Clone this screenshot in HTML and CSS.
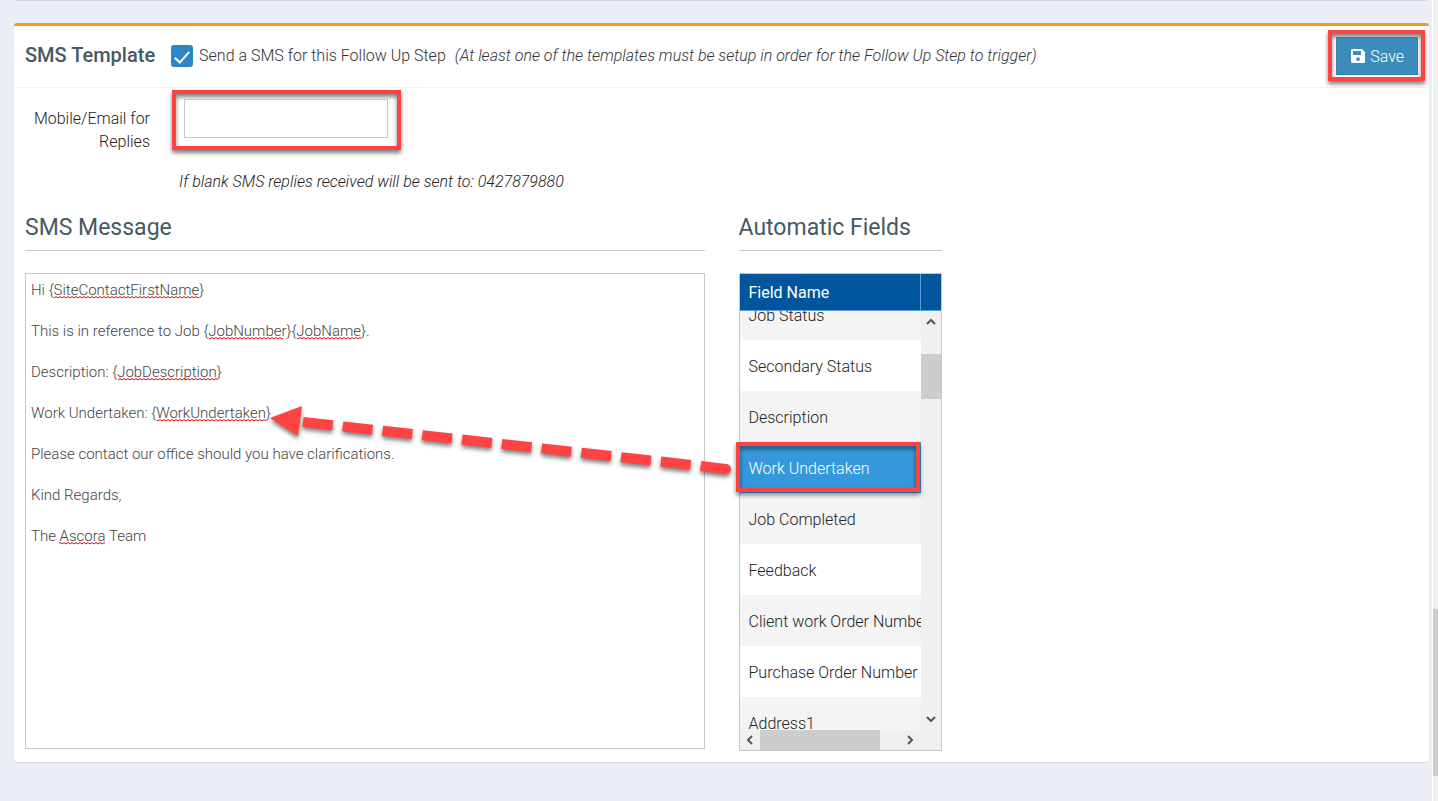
FILE: index.html
```html
<!DOCTYPE html>
<html lang="en">
<head>
  <meta charset="UTF-8" />
  <title>Follow Up Step - SMS Template</title>
  <link rel="stylesheet" href="styles.css">
</head>
<body>

  <main class="page">
    <div class="box-previous"></div>

    <form class="box box-warning">
      <div class="box-header">
        <h3 class="box-title">SMS Template</h3>
        <input type="checkbox" id="send_sms" class="check" checked>
        <label for="send_sms">Send a SMS for this Follow Up Step</label>
        <em class="note">(At least one of the templates must be setup in order for the Follow Up Step to trigger)</em>
        <div class="callout callout-save">
          <button type="button" class="btn-save">
            <svg width="16" height="16" viewBox="0 0 16 16" aria-hidden="true">
              <path fill="#fff" fill-rule="evenodd" d="M2 1h10l3 3v9.500a1.500 1.500 0 0 1-1.500 1.500h-11a1.500 1.500 0 0 1-1.500-1.500v-11a1.500 1.500 0 0 1 1-1.500zM3 3v4h8v-4zM8 9.200a1.900 1.900 0 1 0 0 3.800a1.900 1.900 0 1 0 0-3.800z"/>
            </svg>
            Save
          </button>
        </div>
      </div>

      <div class="box-body">
        <div class="reply">
          <label for="reply_to">Mobile/Email for Replies</label>
          <div class="callout callout-reply">
            <input type="text" id="reply_to" name="reply_to">
          </div>
          <em class="reply-help">If blank SMS replies received will be sent to: 0427879880</em>
        </div>

        <div class="row">
          <div class="col-message">
            <h4><label for="message">SMS Message</label></h4>
            <div class="editor">
              <textarea id="message" name="message" spellcheck="false">Hi {SiteContactFirstName}
This is in reference to Job {JobNumber}{JobName}.
Description: {JobDescription}
Work Undertaken: {WorkUndertaken}
Please contact our office should you have clarifications.
Kind Regards,
The Ascora Team</textarea>
              <!-- spelling marks, one wave per 41px line -->
              <svg class="spelling" width="400" height="300" aria-hidden="true">
                <defs>
                  <pattern id="wave" y="22" width="4" height="41" patternUnits="userSpaceOnUse">
                    <path d="M-1 3L0 2L2 0.500L4 2L5 3" fill="none" stroke="#f00000"/>
                  </pattern>
                </defs>
                <g fill="url(#wave)">
                  <rect x="28" y="22" width="145" height="3"/>
                  <rect x="183" y="63" width="74" height="3"/>
                  <rect x="271" y="63" width="64" height="3"/>
                  <rect x="92" y="104" width="99" height="3"/>
                  <rect x="131" y="145" width="109" height="3"/>
                  <rect x="33" y="268" width="46" height="3"/>
                </g>
              </svg>
            </div>
          </div>

          <div class="col-fields">
            <h4>Automatic Fields</h4>
            <div class="grid">
              <table class="grid-header">
                <thead>
                  <tr><th scope="col">Field Name</th><td class="corner"></td></tr>
                </thead>
              </table>
              <div class="grid-content">
                <div class="grid-rows">
                  <table>
                    <tbody>
                      <tr><td>Job Status</td></tr>
                      <tr><td>Secondary Status</td></tr>
                      <tr><td>Description</td></tr>
                      <tr class="selected"><td>Work Undertaken</td></tr>
                      <tr><td>Job Completed</td></tr>
                      <tr><td>Feedback</td></tr>
                      <tr><td>Client work Order Number</td></tr>
                      <tr><td>Purchase Order Number</td></tr>
                      <tr><td>Address1</td></tr>
                    </tbody>
                  </table>
                </div>
                <div class="scroll-y">
                  <svg width="20" height="20" viewBox="0 0 20 20"><path d="M6 13l4-4l4 4"/></svg>
                  <div class="thumb"></div>
                  <svg width="20" height="20" viewBox="0 0 20 20"><path d="M6 7l4 4l4-4"/></svg>
                </div>
                <div class="scroll-x">
                  <svg width="20" height="20" viewBox="0 0 20 20"><path d="M12 6l-4 4l4 4"/></svg>
                  <div class="thumb"></div>
                  <svg width="20" height="20" viewBox="0 0 20 20"><path d="M7 6l4 4l-4 4"/></svg>
                </div>
              </div>
            </div>
          </div>

          <!-- arrow from the selected field to its place in the message -->
          <svg class="arrow" width="940" height="320" viewBox="8 216 940 320" aria-hidden="true">
            <path d="M270 418L302 406L298 436z" fill="#ff4343"/>
            <path d="M303 422L701 466" fill="none" stroke="#ff4343" stroke-width="10" stroke-dasharray="30 10"/>
            <path d="M701 466L725 469" fill="none" stroke="#ff4343" stroke-width="10"/>
            <circle cx="726" cy="469" r="5" fill="#ff4343"/>
            <rect x="738" y="444" width="180" height="46" fill="none" stroke="#ff4343" stroke-width="4"/>
          </svg>
        </div>
      </div>
    </form>
  </main>

  <div class="page-scroll"><div class="thumb"></div></div>

</body>
</html>
```
FILE: styles.css
```css
* {
  box-sizing: border-box;
}
body {
  margin: 0;
  height: 100vh;
  display: flex;
  overflow: hidden;
  background-color: #ebeef4;
  font-family: Roboto, "Liberation Sans", sans-serif;
  font-size: 16px;
  font-weight: 300;
  line-height: 23px;
  color: #222;
}
.page {
  flex: 1;
  min-width: 0;
  padding: 0 3px 0 14px;
}
.box {
  background-color: white;
  border-radius: 3px;
  box-shadow: 0 1px 1px rgba(0,0,0,0.1);
}
.box-previous {
  height: 1px;
  margin: 0 2px 22px;
  background-color: #d5d8dd;
}
.box-warning {
  border-top: 3px solid #f39c12;
}
.box-header {
  display: flex;
  align-items: center;
  height: 62px;
  padding: 0 4px 2px 11px;
  border-bottom: 1px solid #f4f4f4;
  color: #333;
}
h3, h4 {
  margin: 0;
  color: #455a64;
}
.box-title {
  font-size: 20px;
  font-weight: 500;
  margin-right: 16px;
}
.check {
  appearance: none;
  width: 22px;
  height: 22px;
  margin: 0 6px 0 0;
  border-radius: 3px;
  background-color: #2a88c8;
  display: flex;
  justify-content: center;
}
.check:checked::after {
  content: "";
  width: 6px;
  height: 13px;
  margin-top: 3px;
  border: solid white;
  border-width: 0 2px 2px 0;
  transform: rotate(42deg);
}
.note {
  margin-left: 9px;
}

/* red frames round the controls */
.callout {
  border: 4px solid #ff4343;
  box-shadow: 0 3px 4px rgba(0,0,0,0.5), inset 0 3px 4px rgba(0,0,0,0.5);
}
.callout-save {
  margin-left: auto;
  padding: 3px 3px 2px 4px;
}
.btn-save {
  display: flex;
  align-items: center;
  gap: 4px;
  height: 38px;
  padding: 0 13px 0 13px;
  border: 1px solid #367fa9;
  background-color: #3c8dbc;
  color: white;
  font: inherit;
  cursor: pointer;
}
.btn-save:hover {
  background-color: #367fa9;
}

.box-body {
  padding: 2px 11px 11px;
}
.reply {
  display: grid;
  grid-template-columns: 125px auto;
  column-gap: 22px;
  justify-content: start;
}
.reply label {
  padding-top: 17px;
  text-align: right;
}
.callout-reply {
  justify-self: start;
  height: 60px;
  padding: 5px 9px 0 8px;
}
.callout-reply input {
  width: 204px;
  height: 39px;
  padding: 6px 12px;
  border: 1px solid #c8c8c8;
  background: transparent;
  font: inherit;
}
.reply-help {
  grid-column: 2;
  margin: 17px 0 23px 7px;
}

.row {
  position: relative;
  display: flex;
  margin: 0 -17px;
}
.col-message {
  width: 50%;
  padding: 0 17px;
}
.col-fields {
  width: calc(100% / 6);
  padding: 0 17px;
}
h4 {
  font-size: 23px;
  font-weight: 400;
  line-height: 24px;
  padding-bottom: 10px;
  margin-bottom: 22px;
  border-bottom: 1px solid #c8c8c8;
}
.editor {
  position: relative;
  height: 476px;
  border: 1px solid #c8c8c8;
}
.editor textarea {
  display: block;
  width: 100%;
  height: 474px;
  margin-top: -4px;
  padding: 0 5px;
  border: none;
  outline: none;
  resize: none;
  background: transparent;
  font: inherit;
  font-size: 15px;
  line-height: 41px;
  color: #444;
}
.spelling {
  position: absolute;
  left: 0;
  top: 0;
  pointer-events: none;
}

.grid {
  border: 1px solid #c8c8c8;
}
table {
  width: 100%;
  border-collapse: collapse;
}
.grid-header {
  background-color: #00569c;
  color: white;
}
.grid-header th {
  height: 36px;
  padding: 2px 9px 0;
  border-bottom: 1px solid #5c9edc;
  font-weight: 400;
  text-align: left;
}
.grid-header .corner {
  width: 21px;
  border-left: 1px solid #5c9edc;
  border-bottom: 1px solid #5c9edc;
}
.grid-content {
  display: grid;
  grid-template-columns: minmax(0, 1fr) 20px;
  grid-template-rows: 419px 20px;
  background-color: #f0f0f0;
}
.grid-rows {
  overflow: hidden;
  background-color: white;
}
.grid-rows table {
  margin-top: -22px;
}
.grid-rows td {
  height: 51px;
  padding: 2px 9px 0;
  white-space: nowrap;
}
.grid-rows tr:nth-child(odd) {
  background-color: #f4f4f4;
}
.grid-rows .selected {
  background-color: #3498db;
  color: white;
}
.scroll-y {
  grid-row: 1 / 3;
  grid-column: 2;
  display: flex;
  flex-direction: column;
}
.scroll-y svg:last-child {
  margin-top: auto;
  margin-bottom: 20px;
}
.scroll-x {
  grid-row: 2;
  grid-column: 1;
  display: flex;
}
.scroll-x svg:last-child {
  margin-left: auto;
}
.scroll-x svg, .scroll-y svg {
  fill: none;
  stroke: #555;
  stroke-width: 2;
}
.thumb {
  background-color: #cdcdcd;
}
.scroll-y .thumb {
  height: 45px;
  margin-top: 23px;
}
.scroll-x .thumb {
  width: 120px;
}
.arrow {
  position: absolute;
  left: 0;
  top: 0;
  pointer-events: none;
  filter: drop-shadow(0 3px 2px rgba(0,0,0,0.5));
}

.page-scroll {
  width: 6px;
  padding-top: 609px;
  border-left: 1px solid white;
  background-color: #f0f0f0;
}
.page-scroll .thumb {
  height: 167px;
}
```
